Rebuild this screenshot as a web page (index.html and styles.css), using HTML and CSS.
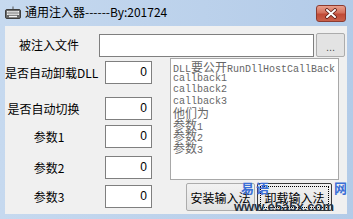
FILE: index.html
```html
<!DOCTYPE html>
<html>
<head>
<meta charset="utf-8">
<link rel="stylesheet" href="styles.css">
</head>
<body>
<div class="window">
  <div class="titlebar">
    <svg class="appicon" width="16" height="13" viewBox="0 0 16 13">
      <path d="M8 0.5 V3.5" stroke="#555" stroke-width="1"/>
      <rect x="0.5" y="3.5" width="15" height="9" rx="1.5" fill="#6b6b6b" stroke="#3f3f3f"/>
      <rect x="2" y="5" width="12" height="1.6" fill="#f4f4f4"/>
      <rect x="2" y="7.4" width="12" height="1.6" fill="#f4f4f4"/>
      <rect x="4" y="9.8" width="8" height="1.4" fill="#f4f4f4"/>
      <path d="M4 5v4M6 5v4M8 5v4M10 5v4M12 5v4" stroke="#8a8a8a" stroke-width="0.6"/>
    </svg>
    <span class="title">通用注入器------By:201724</span>
    <div class="close">
      <svg width="14" height="11" viewBox="0 0 14 11">
        <path d="M3 2 L11 9 M11 2 L3 9" stroke="#5a1a12" stroke-width="3.6" stroke-linecap="round"/>
        <path d="M3 2 L11 9 M11 2 L3 9" stroke="#ffffff" stroke-width="2" stroke-linecap="round"/>
      </svg>
    </div>
  </div>
  <div class="client">
    <div class="row1">
      <span class="lbl">被注入文件</span>
      <div class="edit path"></div>
      <div class="btn browse">...</div>
    </div>
    <div class="body">
      <div class="params">
        <div class="prow m1"><span class="lbl">是否自动卸载DLL</span><div class="edit num">0</div></div>
        <div class="prow m2"><span class="lbl shift">是否自动切换</span><div class="edit num">0</div></div>
        <div class="prow m3"><span class="lbl">参数1</span><div class="edit num">0</div></div>
        <div class="prow m4"><span class="lbl">参数2</span><div class="edit num">0</div></div>
        <div class="prow m5"><span class="lbl">参数3</span><div class="edit num">0</div></div>
      </div>
      <div class="side">
        <div class="list">
          <div class="li">DLL<span class="cj">要公开</span>RunDllHostCallBack</div>
          <div class="li">callback1</div>
          <div class="li">callback2</div>
          <div class="li">callback3</div>
          <div class="li"><span class="cj">他们为</span></div>
          <div class="li"><span class="cj">参数</span>1</div>
          <div class="li"><span class="cj">参数</span>2</div>
          <div class="li"><span class="cj">参数</span>3</div>
        </div>
        <div class="actions">
          <div class="btn act1">安装输入法</div>
          <div class="btn act2 focus"><span class="focusrect">卸载输入法</span></div>
        </div>
      </div>
    </div>
    <div class="wm-cn"><span class="c1">易</span><span class="c2">语</span><span class="c3">网</span></div>
    <div class="wm-url">www.e5a5x.com</div>
  </div>
</div>
</body>
</html>
```

FILE: styles.css
```css
html, body {
  margin: 0;
  padding: 0;
  background: #ffffff;
}

.window {
  width: 353px;
  height: 219px;
  box-sizing: border-box;
  display: flex;
  flex-direction: column;
  background: linear-gradient(to right, #c6d9ef, #b3cbe8);
  font-family: "Noto Sans CJK SC", "Liberation Sans", sans-serif;
  font-size: 12px;
  color: #000;
  overflow: hidden;
}

.titlebar {
  height: 26px;
  flex: none;
  display: flex;
  align-items: flex-start;
  padding-left: 5px;
}

.appicon {
  margin-top: 6px;
  margin-right: 4px;
  flex: none;
}

.title {
  margin-top: 4px;
  line-height: 16px;
  font-size: 12px;
  color: #000;
  white-space: nowrap;
}

.close {
  margin-left: auto;
  margin-right: 7px;
  margin-top: 5px;
  width: 30px;
  height: 17px;
  box-sizing: border-box;
  border: 1px solid #8c3b30;
  border-radius: 3px;
  background: linear-gradient(#e8a08e 0%, #d4705c 45%, #c04a36 55%, #c9604a 100%);
  display: flex;
  align-items: center;
  justify-content: center;
}

.client {
  position: relative;
  margin: 0 6px 0 5px;
  height: 188px;
  background: #f0f0f0;
  display: flex;
  flex-direction: column;
}

.lbl {
  flex: none;
  width: 88px;
  box-sizing: border-box;
  text-align: center;
  white-space: nowrap;
  font-size: 12px;
}

.lbl.shift {
  padding-right: 11px;
}

.edit {
  box-sizing: border-box;
  background: #ffffff;
  border: 1px solid #7f7f7f;
}

.row1 {
  margin-top: 7px;
  height: 24px;
  display: flex;
  align-items: flex-start;
}

.row1 .lbl {
  line-height: 24px;
}

.path {
  margin-left: 6px;
  margin-top: 1px;
  width: 215px;
  height: 23px;
}

.btn {
  box-sizing: border-box;
  border: 1px solid #acacac;
  border-radius: 2px;
  background: linear-gradient(#f2f2f2, #e2e2e2);
  display: flex;
  align-items: center;
  justify-content: center;
  white-space: nowrap;
  font-size: 12px;
}

.browse {
  margin-left: 2px;
  width: 29px;
  height: 24px;
  color: #555;
  font-family: "Liberation Sans", sans-serif;
  font-size: 11px;
  padding-top: 4px;
  background: #e3e3e3;
}

.body {
  display: flex;
}

.params {
  width: 147px;
  display: flex;
  flex-direction: column;
}

.prow {
  height: 23px;
  display: flex;
  align-items: center;
}

.m1 { margin-top: 4px; }
.m2 { margin-top: 13px; }
.m3 { margin-top: 5px; }
.m4 { margin-top: 8px; }
.m5 { margin-top: 6px; }

.num {
  margin-left: 12px;
  width: 47px;
  height: 23px;
  text-align: right;
  padding-right: 4px;
  line-height: 21px;
  font-family: "Liberation Sans", sans-serif;
  font-size: 12px;
}

.side {
  margin-left: 18px;
  width: 169px;
  display: flex;
  flex-direction: column;
}

.list {
  margin-top: 1px;
  height: 122px;
  box-sizing: border-box;
  background: #ffffff;
  border: 1px solid #a8a8a8;
  padding: 2px 0 0 2px;
  color: #666666;
  font-family: "Liberation Mono", monospace;
  font-size: 10px;
  overflow: hidden;
}

.li {
  height: 11.5px;
  line-height: 11.5px;
  white-space: nowrap;
}

.cj {
  font-family: "Noto Sans CJK SC", sans-serif;
  font-size: 12px;
  line-height: 11.5px;
}

.actions {
  margin-top: 3px;
  padding-left: 16px;
  display: flex;
  gap: 2px;
}

.act1 {
  width: 69px;
  height: 28px;
}

.act2 {
  width: 75px;
  height: 28px;
  border-color: #3a3a3a;
}

.focusrect {
  display: flex;
  align-items: center;
  justify-content: center;
  width: 69px;
  height: 22px;
  box-sizing: border-box;
  border: 1px dotted #000;
}

.wm-cn {
  position: absolute;
  left: 236px;
  top: 154px;
  width: 106px;
  height: 16px;
  font-family: "Noto Sans CJK SC", sans-serif;
  font-weight: bold;
  font-size: 13px;
  line-height: 16px;
  color: #3b6fd6;
  display: flex;
}

.wm-cn .c2 { margin-left: 2px; }
.wm-cn .c3 { margin-left: auto; }

.wm-url {
  position: absolute;
  left: 229px;
  top: 173px;
  font-family: "Liberation Sans", sans-serif;
  font-weight: bold;
  font-size: 13px;
  line-height: 16px;
  color: #26303c;
  white-space: nowrap;
}
```
